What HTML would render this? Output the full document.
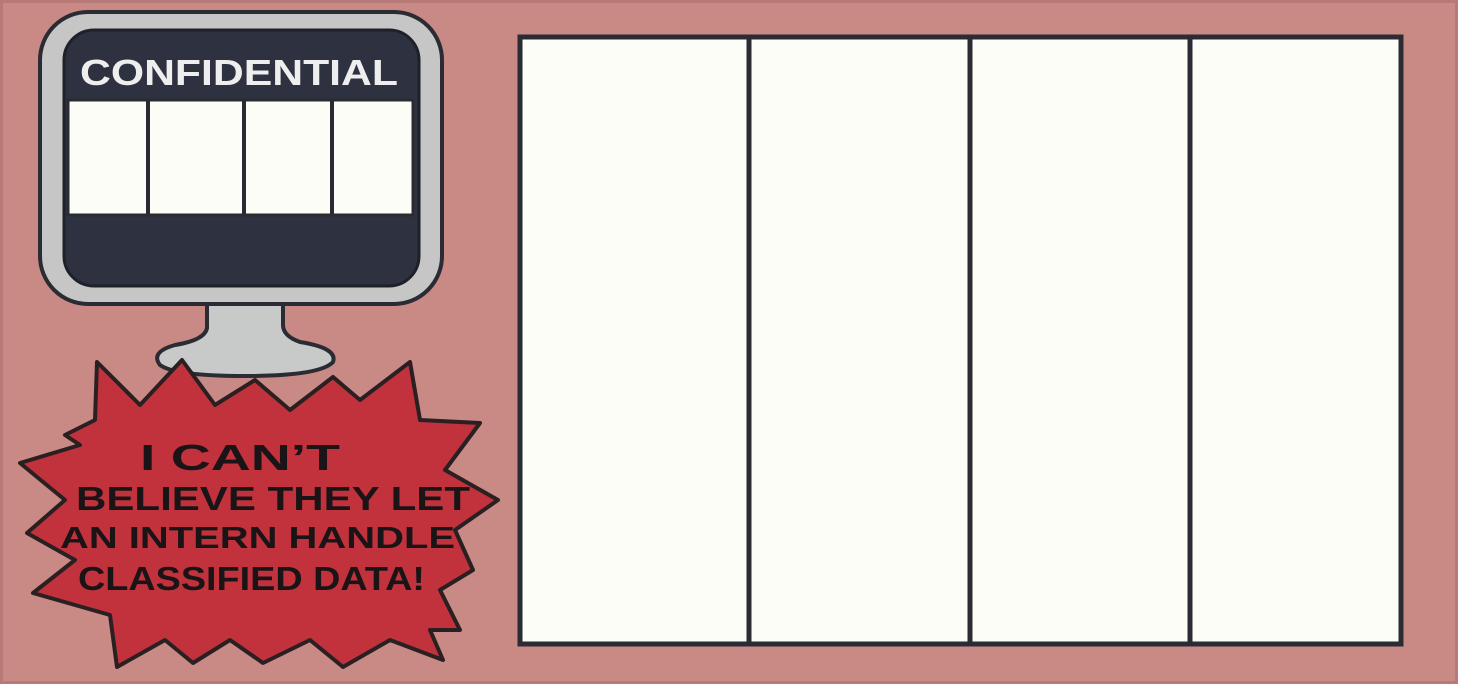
<!DOCTYPE html>
<html><head><style>
html,body{margin:0;padding:0;width:1458px;height:684px;overflow:hidden;background:#c98a85;}
svg{display:block}
</style></head><body>
<svg width="1458" height="684" viewBox="0 0 1458 684" xmlns="http://www.w3.org/2000/svg">
<rect width="1458" height="684" fill="#c98a85"/>
<rect x="0" y="0" width="1458" height="684" fill="none" stroke="#b87a76" stroke-width="6"/>
<rect x="520" y="37" width="881" height="607" fill="#fdfdf8" stroke="#2a2b33" stroke-width="5"/>
<line x1="749" y1="37" x2="749" y2="644" stroke="#2a2b33" stroke-width="5"/>
<line x1="970" y1="37" x2="970" y2="644" stroke="#2a2b33" stroke-width="5"/>
<line x1="1190" y1="37" x2="1190" y2="644" stroke="#2a2b33" stroke-width="5"/>
<path d="M207 300 L207 328 Q205 340 175 345 Q150 352 160 365 Q175 376 245 376 Q320 376 333 362 Q338 348 300 342 Q283 336 283 325 L283 300 Z" fill="#c8c9c9" stroke="#2a2b33" stroke-width="4"/>
<rect x="40" y="12" width="402" height="292" rx="48" fill="#c6c6c6" stroke="#2a2b33" stroke-width="4"/>
<rect x="64" y="30" width="355" height="256" rx="30" fill="#2e3240" stroke="#1f2128" stroke-width="3"/>
<rect x="68" y="100" width="345" height="115" fill="#fdfdf8" stroke="#2a2b33" stroke-width="3"/>
<line x1="148" y1="100" x2="148" y2="215" stroke="#2a2b33" stroke-width="4"/>
<line x1="244" y1="100" x2="244" y2="215" stroke="#2a2b33" stroke-width="4"/>
<line x1="332" y1="100" x2="332" y2="215" stroke="#2a2b33" stroke-width="4"/>
<text x="80" y="85" textLength="318" lengthAdjust="spacingAndGlyphs" font-family="Liberation Sans, sans-serif" font-weight="bold" font-size="36" fill="#eeeeee">CONFIDENTIAL</text>
<polygon points="97,362 140,405 182,360 215,405 255,380 290,410 333,377 360,400 410,362 420,420 480,423 445,470 498,500 455,530 473,570 440,590 460,630 430,630 443,660 390,640 343,667 310,640 263,663 230,640 193,663 165,640 117,667 110,615 33,593 75,560 27,533 65,500 20,463 80,445 65,435 95,420" fill="#c1323d" stroke="#2a2022" stroke-width="4" stroke-linejoin="round"/>
<g font-family="Liberation Sans, sans-serif" font-weight="bold" fill="#1a1416">
<text x="140" y="470" font-size="36" textLength="200" lengthAdjust="spacingAndGlyphs">I CAN’T</text>
<text x="76" y="510" font-size="33" textLength="394" lengthAdjust="spacingAndGlyphs">BELIEVE THEY LET</text>
<text x="60" y="548" font-size="31" textLength="395" lengthAdjust="spacingAndGlyphs">AN INTERN HANDLE</text>
<text x="78" y="590" font-size="33" textLength="347" lengthAdjust="spacingAndGlyphs">CLASSIFIED DATA!</text>
</g>
</svg>
</body></html>
